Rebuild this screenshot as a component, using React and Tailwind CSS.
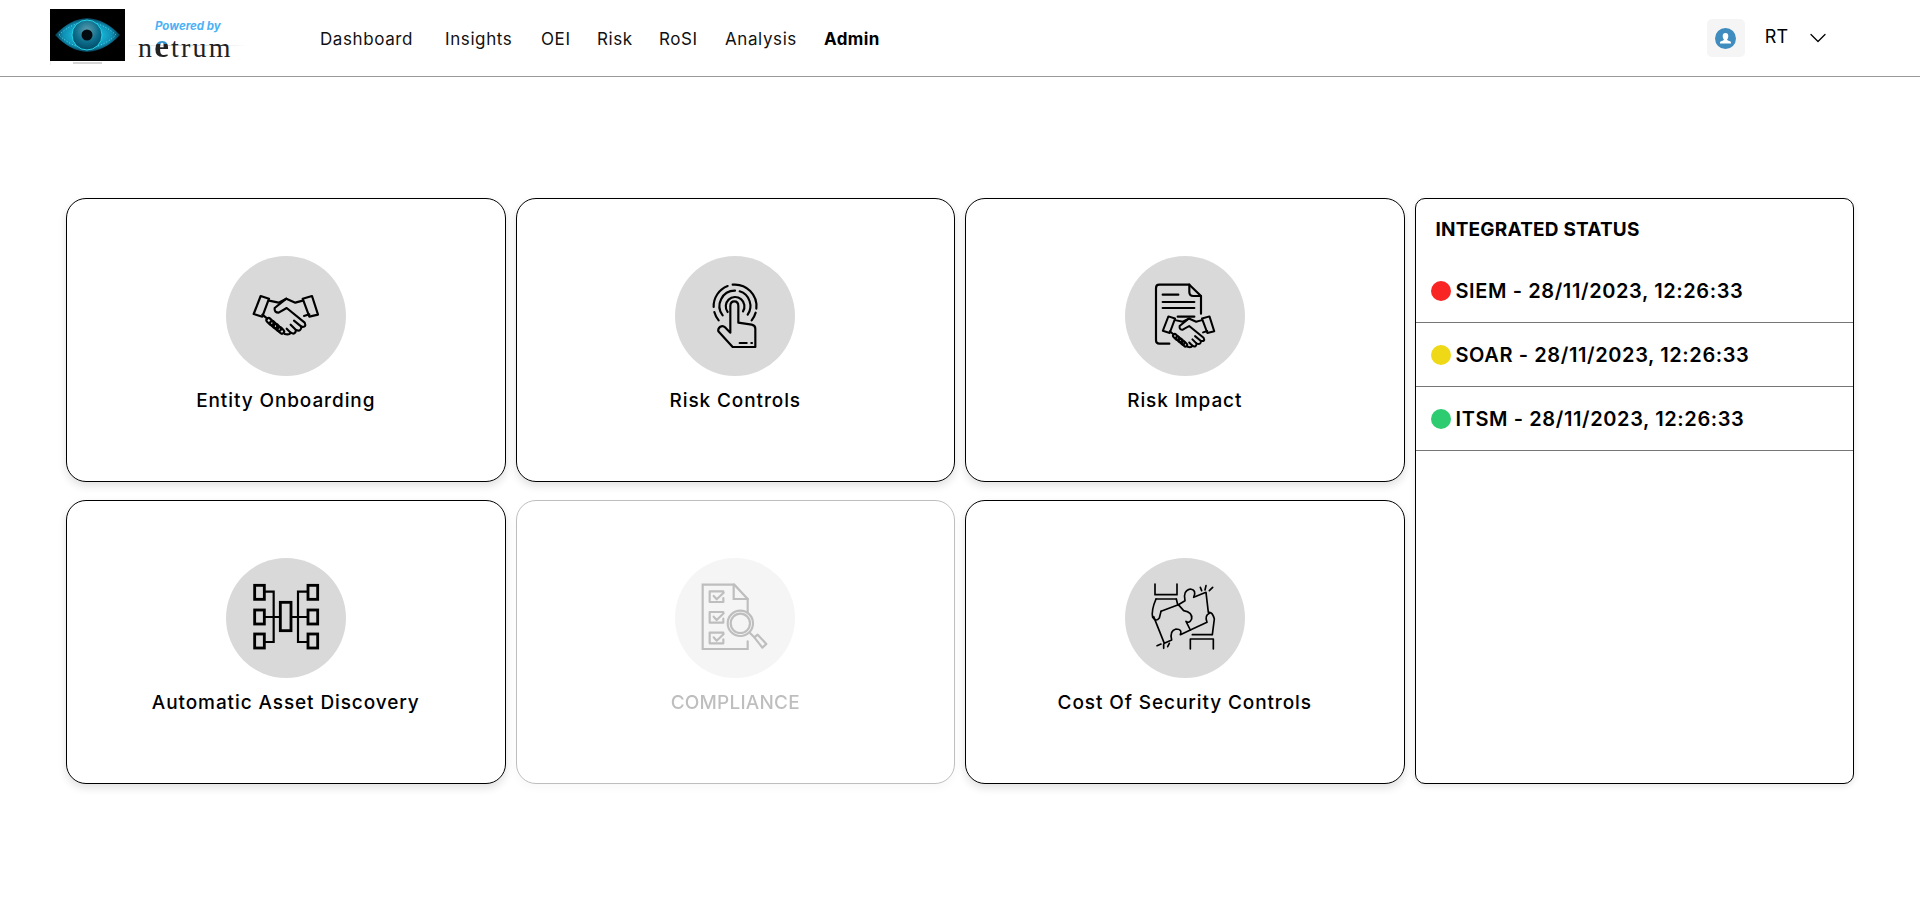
import React from 'react';
import { ChevronDown } from 'lucide-react';

const NAV = [
  { label: 'Dashboard', w: 'w-[95px]' },
  { label: 'Insights', w: 'w-[66px]' },
  { label: 'OEI', w: 'w-[26px]' },
  { label: 'Risk', w: 'w-[32px]' },
  { label: 'RoSI', w: 'w-[36px]' },
  { label: 'Analysis', w: 'w-[69px]' },
];

const STATUS = [
  { name: 'SIEM', dot: 'bg-[#f92424]' },
  { name: 'SOAR', dot: 'bg-[#efd816]' },
  { name: 'ITSM', dot: 'bg-[#2ecc71]' },
];

// all icons use the same box: 240 units across the grey circle's middle, 80px on screen
function IconBox({ children, strokeWidth = 6.5 }) {
  return (
    <svg viewBox="92 92 240 240" className="w-20 h-20" fill="none" stroke="#000" strokeWidth={strokeWidth} strokeLinecap="round" strokeLinejoin="round">
      {children}
    </svg>
  );
}

function HandshakeLines() {
  return (
    <>
      <path d="M136 152 L161 160 L141 214 L115 206 Z" />
      <path d="M262 160 L290 152 L308 208 L282 214 Z" />
      <path d="M161 166 L190 172 L213 160 L240 172 L262 166" />
      <path d="M213 160 L178 188 Q176 202 190 202 L214 188 L268 232 Q275 247 258 244 L236 226" />
      <path d="M258 244 Q258 260 242 254 L226 238" />
      <path d="M242 254 Q240 270 226 262 L214 250" />
      <path d="M226 262 Q222 270 208 266" />
      <path d="M282 207 L266 212" />
      <path d="M141 208 L156 220" />
      <rect x="152" y="222" width="25" height="13" rx="6.5" transform="rotate(45 164 228)" />
      <rect x="163" y="231" width="25" height="13" rx="6.5" transform="rotate(45 175 237)" />
      <rect x="174" y="240" width="25" height="13" rx="6.5" transform="rotate(45 186 246)" />
      <rect x="186" y="249" width="22" height="13" rx="6.5" transform="rotate(45 197 255)" />
    </>
  );
}

function EntityIcon() {
  return (
    <IconBox>
      <HandshakeLines />
    </IconBox>
  );
}

function ControlsIcon() {
  return (
    <IconBox>
      <path d="M198 262 V182 Q198 168 210 168 Q222 168 222 182 V232 L262 238 Q273 240 273 250 V305 H205 L162 258 Q160 250 168 244 Q176 240 182 246 L198 262" />
      <path d="M226 293 H247" />
      <path d="M261 293 H263" />
      <path d="M190 200 A28 28 0 1 1 236 198" />
      <path d="M175 210 A46 46 0 0 1 212 136" />
      <path d="M226 138 A46 46 0 0 1 250 208" />
      <path d="M163 225 A65 65 0 0 1 150 200" />
      <path d="M148 185 A65 65 0 0 1 190 122" />
      <path d="M205 118 A65 65 0 0 1 276 190" />
      <path d="M274 202 A65 65 0 0 1 262 225" />
    </IconBox>
  );
}

function ImpactIcon() {
  return (
    <IconBox>
      <path d="M165 295 H135 Q125 295 125 285 V128 Q125 118 135 118 H225 L260 152 V205" />
      <path d="M225 118 V140 Q225 152 237 152 H260" />
      <path d="M145 148 H192 M145 170 H240 M145 188 H240 M190 214 H240" />
      <g transform="translate(223 258) scale(.8) translate(-212 -208)" strokeWidth="7.5">
        <HandshakeLines />
      </g>
    </IconBox>
  );
}

function DiscoveryIcon() {
  return (
    <IconBox>
      <g strokeWidth="8.5" strokeLinejoin="miter">
        <rect x="118" y="114" width="29" height="42" />
        <rect x="118" y="188" width="29" height="42" />
        <rect x="118" y="260" width="29" height="42" />
        <rect x="278" y="114" width="29" height="42" />
        <rect x="278" y="188" width="29" height="42" />
        <rect x="278" y="260" width="29" height="42" />
        <rect x="195" y="165" width="32" height="85" />
      </g>
      <path strokeLinecap="butt" strokeLinejoin="miter" d="M147 133 H175 V284 H147 M147 209 H195 M227 209 H278 M278 133 H248 V284 H278" />
    </IconBox>
  );
}

function ComplianceIcon() {
  return (
    <IconBox>
      <path strokeLinejoin="miter" d="M250 195 V155 L210 112 H115 V305 H250 V282" />
      <path strokeLinejoin="miter" d="M208 112 V155 H250" />
      <path d="M177 132 H136 V164 H177 V152 M148 146 L157 156 L178 136" />
      <path d="M177 194 H136 V226 H177 V214 M148 208 L157 218 L178 198" />
      <path d="M177 256 H136 V288 H177 V276 M148 270 L157 280 L178 260" />
      <circle cx="228" cy="228" r="38" />
      <circle cx="228" cy="228" r="29" />
      <path d="M256 256 L270 270" />
      <path d="M270 270 L280 262 L306 290 L294 301 Z" />
    </IconBox>
  );
}

function CostIcon() {
  return (
    <IconBox strokeWidth={5}>
      <path d="M122 110 V142 M188 110 V142 M122 142 H188 M125 155 H186" />
      <path d="M125 155 Q110 190 115 210 Q125 225 135 212 L140 192" />
      <path d="M186 155 L190 172" />
      <path d="M118 208 L150 288 L172 278 Q165 250 185 245 Q205 245 198 262 L228 248 L278 225 Q270 205 285 198" />
      <path d="M140 192 L192 172 L212 160 Q205 130 228 125 Q248 128 238 150 L275 135 L282 195" />
      <path d="M192 172 L208 190 Q235 195 232 215 Q225 230 215 222 L228 248" />
      <path d="M228 305 V275 H297 V305 M234 262 H292" />
      <path d="M294 262 L300 215 Q295 195 285 195" />
      <path d="M258 120 L262 130 M275 115 L272 128 M295 120 L285 130 M128 295 L140 290 M148 290 L148 303 M165 288 L160 298" />
    </IconBox>
  );
}

const CARDS = [
  { label: 'Entity Onboarding', Icon: EntityIcon },
  { label: 'Risk Controls', Icon: ControlsIcon },
  { label: 'Risk Impact', Icon: ImpactIcon },
  { label: 'Automatic Asset Discovery', Icon: DiscoveryIcon },
  { label: 'COMPLIANCE', Icon: ComplianceIcon, disabled: true },
  { label: 'Cost Of Security Controls', Icon: CostIcon },
];

function EyeLogo() {
  return (
    <svg viewBox="0 0 75 56" className="w-[75px] h-[56px] shrink-0 block">
      <defs>
        <radialGradient id="iris" cx="50%" cy="35%" r="60%">
          <stop offset="0%" stopColor="#5f9fb0" />
          <stop offset="65%" stopColor="#0b6d8c" />
          <stop offset="100%" stopColor="#05506b" />
        </radialGradient>
        <radialGradient id="glow" cx="50%" cy="50%" r="50%">
          <stop offset="40%" stopColor="#17b6d8" />
          <stop offset="75%" stopColor="#0f8fb4" />
          <stop offset="100%" stopColor="#06364a" />
        </radialGradient>
      </defs>
      <rect width="75" height="52" fill="#000" />
      <path d="M5 26 Q20 10 37 9 Q55 10 70 26 Q55 42 37 43 Q20 42 5 26 Z" fill="url(#glow)" />
      <path d="M9 26 Q21 14 37 13 Q53 14 66 26 Q53 38 37 39 Q21 38 9 26 Z" fill="none" stroke="#5fe6f5" strokeWidth="1" strokeDasharray="1 2" />
      <circle cx="37" cy="26" r="15" fill="url(#iris)" stroke="#23d3e8" strokeWidth="1" />
      <circle cx="37" cy="26" r="5.5" fill="#020a10" />
      <path d="M0 52 V56" stroke="#ccc" strokeWidth="0.6" />
      <path d="M23 54 H52" stroke="#aaa" strokeWidth="1" />
    </svg>
  );
}

export default function App() {
  return (
    <div className="min-h-[911px] bg-white text-black font-['Inter',sans-serif]">
      <header className="h-[77px] flex items-center border-b border-[#999] pl-[50px]">
        <div className="flex items-start h-[56px] w-[270px] -mt-[2px]">
          <EyeLogo />
          <div className="relative w-[120px] h-[52px]">
            <div className="absolute left-[30px] top-[10px] text-[11.5px] font-bold italic leading-[14px] text-[#4db1f5] whitespace-nowrap">Powered by</div>
            <div className="absolute left-0 top-[36px] w-[122px] h-[1px] bg-gradient-to-r from-transparent via-[#ccc] to-transparent" />
            <div className="absolute left-[13px] top-[25px] font-['Liberation_Serif',serif] text-[28px] leading-[24px] tracking-[2.2px] text-[#222] whitespace-nowrap">
              n<span className="inline-block text-[33px] leading-[24px] font-bold text-transparent bg-clip-text bg-[linear-gradient(#2f8fd0_42%,#222_42%)]">e</span>trum
            </div>
          </div>
        </div>
        <nav className="flex items-center gap-[30px] text-[17px] leading-[26px] mt-[2px] text-[#111] tracking-[0.6px]">
          {NAV.map((n) => (
            <a key={n.label} className={`${n.w} whitespace-nowrap`}>{n.label}</a>
          ))}
          <a className="font-bold text-black tracking-[0.4px] whitespace-nowrap">Admin</a>
        </nav>
        <div className="ml-auto flex items-center pr-[88px]">
          <div className="w-[38px] h-[38px] rounded-[5px] bg-[#f5f5f5] flex items-center justify-center">
            <svg viewBox="0 0 21 21" className="w-[21px] h-[21px]">
              <circle cx="10.5" cy="10.5" r="10.5" fill="#3f8cbf" />
              <path d="M10.5 5 Q13.3 5 13.3 8.2 Q13.3 10.4 12 11.6 Q12 12.6 15.5 13.6 Q16.2 14 16 15.5 H5 Q4.8 14 5.5 13.6 Q9 12.6 9 11.6 Q7.7 10.4 7.7 8.2 Q7.7 5 10.5 5 Z" fill="#fff" />
            </svg>
          </div>
          <span className="ml-[20px] text-[18px] leading-[24px] -mt-[2px]">RT</span>
          <ChevronDown className="ml-[16px] w-[28px] h-[28px]" strokeWidth={1.1} />
        </div>
      </header>

      <main className="px-[66px] pt-[121px]">
        <div className="grid grid-cols-4 grid-rows-[284px_284px] gap-x-[10px] gap-y-[18px]">
          {CARDS.map(({ label, Icon, disabled }) => (
            <div
              key={label}
              className={`rounded-[20px] border border-black bg-white shadow-[0_4px_8px_rgba(0,0,0,0.12)] flex flex-col items-center pt-[57px] ${disabled ? 'opacity-25' : ''}`}
            >
              <div className="w-[120px] h-[120px] rounded-full bg-[#d9d9d9] flex items-center justify-center">
                <Icon />
              </div>
              <div className={`mt-[11px] text-[19px] leading-[27px] font-medium whitespace-nowrap ${disabled ? 'tracking-[0.2px]' : 'tracking-[0.9px]'}`}>{label}</div>
            </div>
          ))}

          <aside className="col-start-4 row-start-1 row-span-2 rounded-[10px] border border-black bg-white shadow-[0_2px_6px_rgba(0,0,0,0.1)]">
            <div className="h-[60px] pt-[17px] pl-[20px] text-[19px] leading-[27px] font-bold tracking-[0.2px]">INTEGRATED STATUS</div>
            {STATUS.map((s) => (
              <div key={s.name} className="h-[64px] border-b border-[#777] flex items-center gap-[5px] pl-[15px]">
                <span className={`w-[20px] h-[20px] rounded-full ${s.dot}`} />
                <span className="text-[20px] leading-[30px] font-semibold tracking-[0.6px] whitespace-nowrap">{s.name} - 28/11/2023, 12:26:33</span>
              </div>
            ))}
          </aside>
        </div>
      </main>
    </div>
  );
}
